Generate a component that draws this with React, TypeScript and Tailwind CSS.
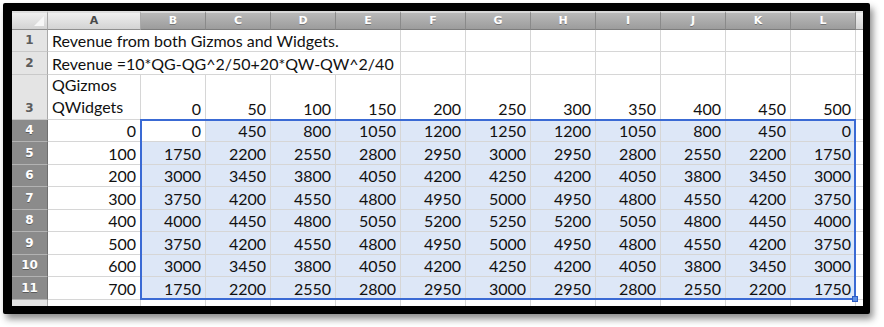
import React from "react";

const letters = ["A", "B", "C", "D", "E", "F", "G", "H", "I", "J", "K", "L"];
const gizmos = [0, 50, 100, 150, 200, 250, 300, 350, 400, 450, 500];
const widgets = [0, 100, 200, 300, 400, 500, 600, 700];

const revenue = (qg: number, qw: number) => 10 * qg - (qg * qg) / 50 + 20 * qw - (qw * qw) / 40;

const tracks =
    "grid grid-cols-[36px_93px_repeat(11,65px)_7px] grid-rows-[19px_22px_23px_45px_22px_23px_22px_23px_22px_23px_22px_23px_6px]";
const cell = "border-r border-b border-[#d6d6d6] flex items-end pb-[1px] leading-[19px] whitespace-nowrap";
const num = `${cell} justify-end pr-[4px]`;

function RowHead({ n, selected }: { n: number; selected?: boolean }) {
    return (
        <div
            className={
                selected
                    ? "flex items-end justify-center pb-[3px] bg-[#8b8b8b] border-b border-[#b3b3b3] border-r border-r-[#6f6f6f] text-white font-bold text-[12px] leading-[16px] font-['DejaVu_Sans',sans-serif] [text-shadow:0_1px_0_rgba(0,0,0,0.35)]"
                    : "flex items-end justify-center pb-[3px] bg-[#e4e4e4] border-b border-[#c9c9c9] border-r border-r-[#a9a9a9] text-[#5c5c5c] font-bold text-[12px] leading-[16px] font-['DejaVu_Sans',sans-serif]"
            }
        >
            {n}
        </div>
    );
}

export default function App() {
    return (
        <div className="w-[884px] h-[327px] bg-white pt-[3px] pl-[3px]">
            <div className="w-[867px] h-[311px] bg-white border-black border-t-[8px] border-l-[9px] border-r-[7px] border-b-[8px] rounded-[2px] shadow-[3px_5px_7px_rgba(0,0,0,0.45)] overflow-hidden">
                <div className="relative">
                    <div className={`${tracks} text-[16px] text-[#111] font-['Lato',sans-serif]`}>
                        {/* column headers */}
                        <div className="relative border-t-2 border-t-[#dedede] bg-gradient-to-b from-[#efefef] to-[#d3d3d3] border-r border-r-[#a9a9a9] border-b border-b-[#8f8f8f]">
                            <div className="absolute right-[3px] bottom-[3px] w-0 h-0 border-l-[10px] border-l-transparent border-b-[10px] border-b-[#f7f7f7]" />
                        </div>
                        <div className="flex items-center justify-center border-t-2 border-t-[#dedede] bg-gradient-to-b from-[#efefef] to-[#d3d3d3] border-r border-r-[#a9a9a9] border-b border-b-[#8f8f8f] text-[11px] font-bold text-[#4a4a4a] font-['DejaVu_Sans',sans-serif]">
                            A
                        </div>
                        {letters.slice(1).map((l) => (
                            <div
                                key={l}
                                className="flex items-center justify-center border-t-2 border-t-[#d8d8d8] bg-gradient-to-b from-[#b9b9b9] to-[#9c9c9c] border-r border-r-[#8a8a8a] border-b border-b-[#7d7d7d] text-[11px] font-bold text-white font-['DejaVu_Sans',sans-serif] [text-shadow:0_1px_0_rgba(0,0,0,0.3)]"
                            >
                                {l}
                            </div>
                        ))}
                        <div className="border-t-2 border-t-[#dedede] bg-gradient-to-b from-[#efefef] to-[#d3d3d3] border-b border-b-[#8f8f8f]" />

                        {/* row 1 */}
                        <RowHead n={1} />
                        <div className={`${cell} col-span-5 pl-[4px]`}>Revenue from both Gizmos and Widgets.</div>
                        {Array.from({ length: 7 }).map((_, i) => (
                            <div key={i} className={cell} />
                        ))}
                        <div className="border-b border-[#d6d6d6]" />

                        {/* row 2 */}
                        <RowHead n={2} />
                        <div className={`${cell} col-span-5 pl-[4px]`}>Revenue =10*QG-QG^2/50+20*QW-QW^2/40</div>
                        {Array.from({ length: 7 }).map((_, i) => (
                            <div key={i} className={cell} />
                        ))}
                        <div className="border-b border-[#d6d6d6]" />

                        {/* row 3 */}
                        <RowHead n={3} />
                        <div className="border-r border-b border-[#d6d6d6] flex flex-col justify-end pb-[1px] pl-[4px] leading-[22px] whitespace-nowrap">
                            <span>QGizmos</span>
                            <span>QWidgets</span>
                        </div>
                        {gizmos.map((g) => (
                            <div key={g} className={num}>
                                {g}
                            </div>
                        ))}
                        <div className="border-b border-[#d6d6d6]" />

                        {/* data rows */}
                        {widgets.map((w, r) => (
                            <React.Fragment key={w}>
                                <RowHead n={r + 4} selected />
                                <div className={num}>{w}</div>
                                {gizmos.map((g, c) => (
                                    <div
                                        key={g}
                                        className={`${num} ${r === 0 && c === 0 ? "bg-white" : "bg-[#dde7f7]"} border-[#c9ced8]`}
                                    >
                                        {revenue(g, w)}
                                    </div>
                                ))}
                                <div className="border-b border-[#d6d6d6]" />
                            </React.Fragment>
                        ))}

                        {/* row 12, cut off */}
                        <div className="bg-[#e4e4e4] border-r border-r-[#a9a9a9]" />
                        <div className="border-r border-[#d6d6d6]" />
                        {gizmos.map((g) => (
                            <div key={g} className="border-r border-[#d6d6d6]" />
                        ))}
                        <div />
                    </div>

                    {/* selection outline B4:L11, on a matching grid laid over the sheet */}
                    <div className={`${tracks} absolute inset-0 pointer-events-none`}>
                        <div className="relative col-start-3 col-span-11 row-start-5 row-span-8 -ml-px -mt-px border-2 border-[#3a6ad4]">
                            <div className="absolute -right-[4px] -bottom-[4px] w-[6px] h-[6px] bg-[#5b8fe6] border border-[#2f5dc4]" />
                        </div>
                    </div>
                </div>
            </div>
        </div>
    );
}
